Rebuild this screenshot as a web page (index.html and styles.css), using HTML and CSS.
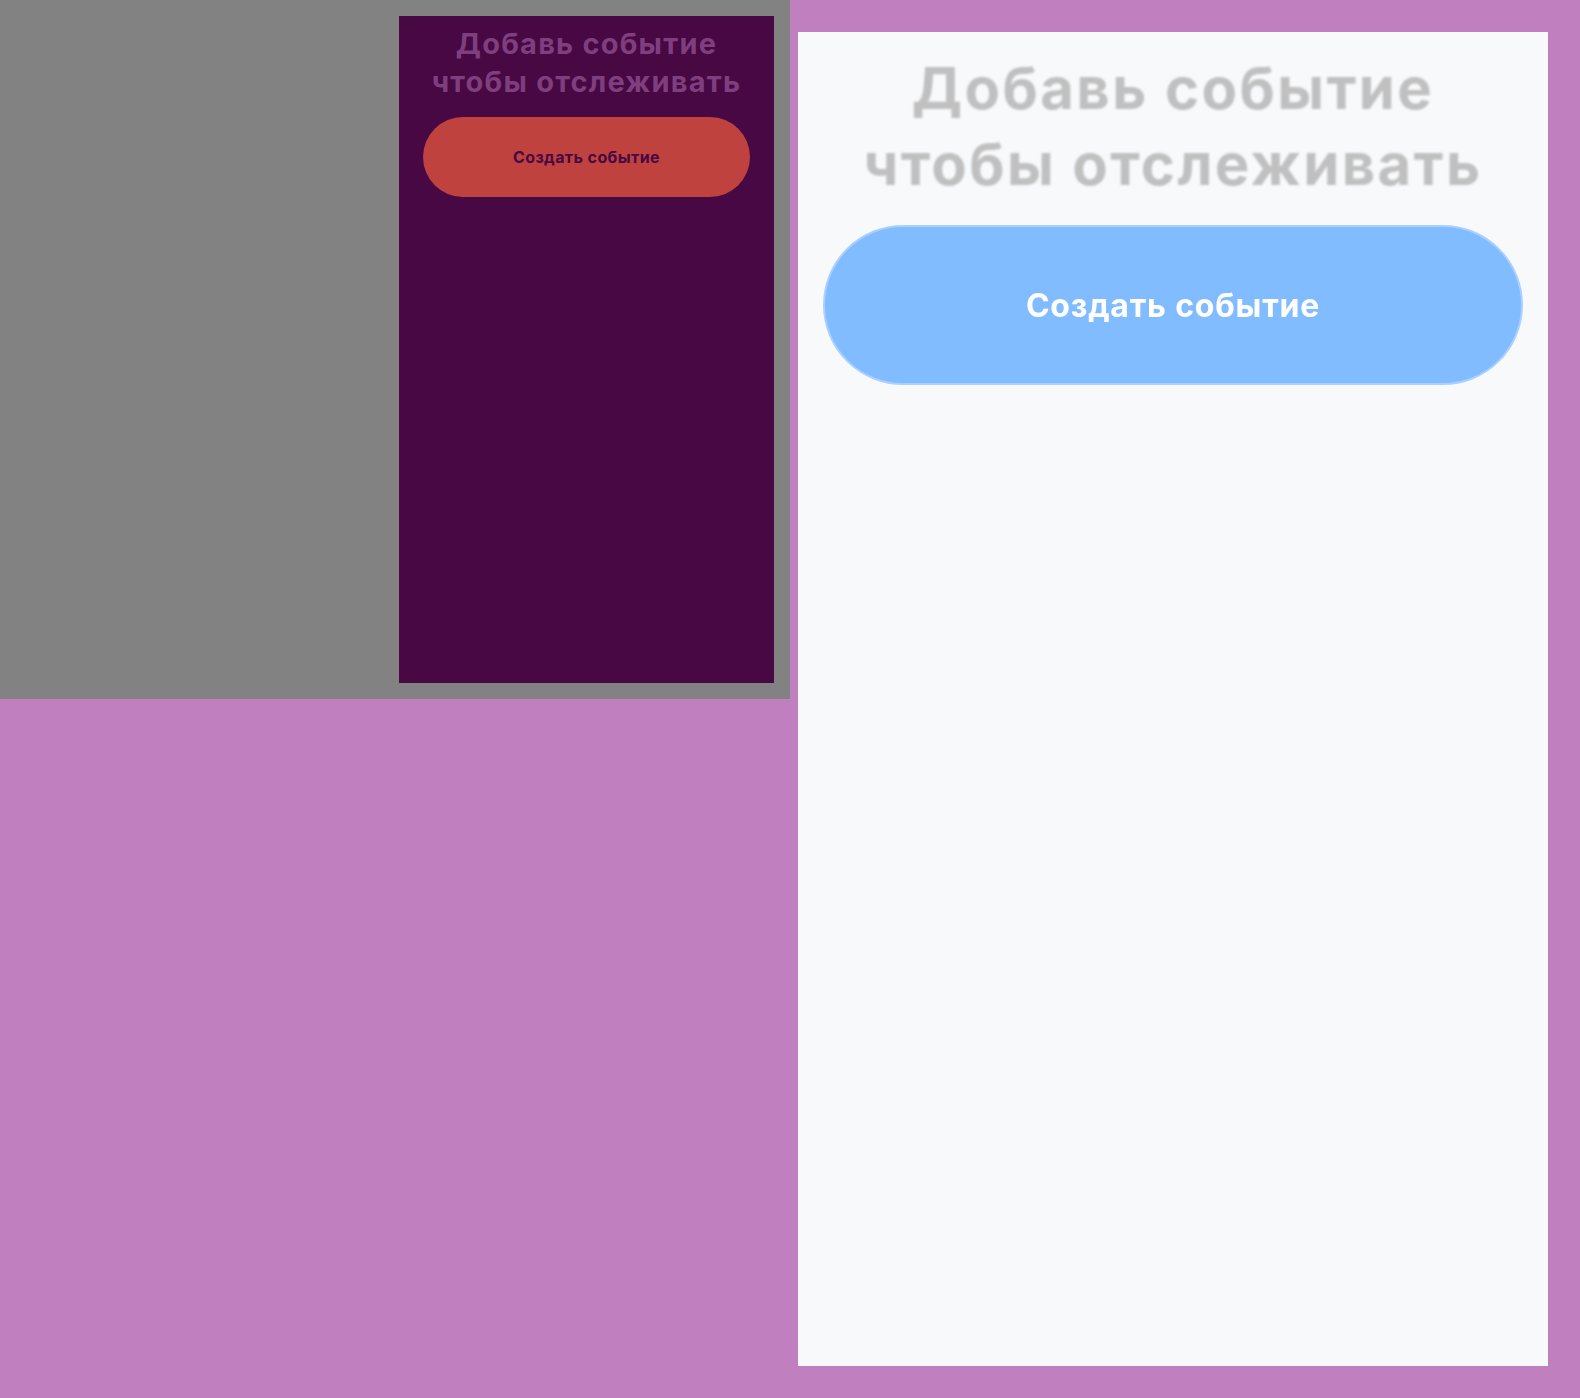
FILE: index.html
```html
<!DOCTYPE html>
<html lang="ru">
<head>
<meta charset="utf-8">
<title>События</title>
<link rel="stylesheet" href="styles.css">
</head>
<body>
<div class="stage">
  <div class="preview">
    <div class="phone">
      <h1 class="title">Добавь событие<br>чтобы отслеживать</h1>
      <button class="cta">Создать событие</button>
    </div>
  </div>
  <div class="right">
    <div class="phone-lg">
      <h1 class="title-lg">Добавь событие<br>чтобы отслеживать</h1>
      <button class="cta-lg">Создать событие</button>
    </div>
  </div>
</div>
</body>
</html>
```
FILE: styles.css
```css
html, body {
  margin: 0;
  padding: 0;
  background: #c07fbf;
  font-family: Inter, "Noto Sans", sans-serif;
}
.stage {
  display: flex;
  align-items: flex-start;
  gap: 8px;
}
.preview {
  width: 790px;
  height: 699px;
  box-sizing: border-box;
  padding: 16px;
  background: #828282;
  display: flex;
  justify-content: flex-end;
}
.phone {
  width: 375px;
  height: 667px;
  background: #470843;
  box-sizing: border-box;
  padding: 0 24px;
  display: flex;
  flex-direction: column;
  align-items: center;
}
.title {
  margin: 9px 0 0;
  font-size: 29px;
  line-height: 38px;
  font-weight: 700;
  color: #7f3e7e;
  text-align: center;
  letter-spacing: 1.2px;
  white-space: nowrap;
}
.cta {
  margin-top: 16px;
  width: 327px;
  height: 80px;
  border: none;
  border-radius: 40px;
  background: #c0423f;
  color: #470843;
  font-family: Inter, "Noto Sans", sans-serif;
  font-size: 16px;
  font-weight: 700;
  letter-spacing: 0.4px;
}
.right {
  padding-top: 32px;
}
.phone-lg {
  width: 750px;
  height: 1334px;
  background: #f8f9fb;
  box-sizing: border-box;
  padding: 0 25px;
  display: flex;
  flex-direction: column;
  align-items: center;
}
.title-lg {
  margin: 18px 0 0;
  font-size: 58px;
  line-height: 76px;
  font-weight: 700;
  color: #c0c0c0;
  text-align: center;
  letter-spacing: 2.4px;
  white-space: nowrap;
  filter: blur(0.8px);
}
.cta-lg {
  margin-top: 23px;
  width: 700px;
  height: 160px;
  border: 2px solid #a9d0ff;
  border-radius: 80px;
  background: #80bcff;
  color: #ffffff;
  font-family: Inter, "Noto Sans", sans-serif;
  font-size: 32px;
  font-weight: 700;
  letter-spacing: 0.8px;
  filter: blur(0.6px);
}
```
